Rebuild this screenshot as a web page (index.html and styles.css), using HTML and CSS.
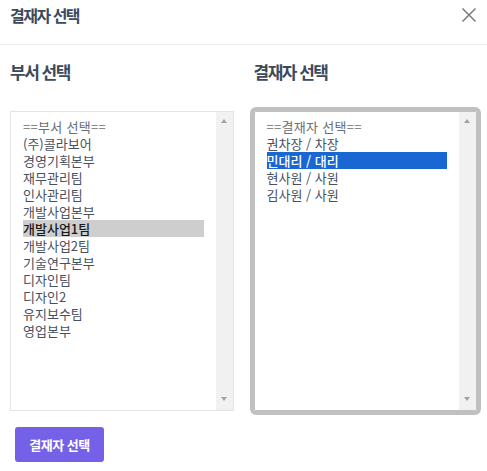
FILE: index.html
```html
<!DOCTYPE html>
<html lang="ko">
<head>
<meta charset="utf-8">
<link rel="stylesheet" href="styles.css">
</head>
<body>
<div class="modal">
  <div class="header">
    <div class="title">결재자 선택</div>
    <button class="close" aria-label="닫기">
      <svg width="16" height="16" viewBox="0 0 16 16"><path d="M1.5 1.5 L14.5 14.5 M14.5 1.5 L1.5 14.5" stroke="#7a7a7a" stroke-width="1.5" fill="none"/></svg>
    </button>
  </div>
  <div class="body">
    <div class="col">
      <h3 class="heading">부서 선택</h3>
      <div class="listbox">
        <div class="options">
          <div class="opt placeholder">==부서 선택==</div>
          <div class="opt">(주)콜라보어</div>
          <div class="opt">경영기획본부</div>
          <div class="opt">재무관리팀</div>
          <div class="opt">인사관리팀</div>
          <div class="opt">개발사업본부</div>
          <div class="opt sel-gray">개발사업1팀</div>
          <div class="opt">개발사업2팀</div>
          <div class="opt">기술연구본부</div>
          <div class="opt">디자인팀</div>
          <div class="opt">디자인2</div>
          <div class="opt">유지보수팀</div>
          <div class="opt">영업본부</div>
        </div>
        <div class="scrollbar"><span class="arr up"></span><span class="arr down"></span></div>
      </div>
    </div>
    <div class="col">
      <h3 class="heading">결재자 선택</h3>
      <div class="listbox focused">
        <div class="options">
          <div class="opt placeholder">==결재자 선택==</div>
          <div class="opt">권차장 / 차장</div>
          <div class="opt sel-blue">민대리 / 대리</div>
          <div class="opt">현사원 / 사원</div>
          <div class="opt">김사원 / 사원</div>
        </div>
        <div class="scrollbar"><span class="arr up"></span><span class="arr down"></span></div>
      </div>
    </div>
  </div>
  <div class="footer">
    <button class="btn">결재자 선택</button>
  </div>
</div>
</body>
</html>
```

FILE: styles.css
```css
* { box-sizing: border-box; }
html, body { margin: 0; padding: 0; background: #fff; }
body {
  font-family: "Noto Sans CJK KR", "Noto Sans", sans-serif;
  color: #3e4b5c;
  width: 487px;
  height: 471px;
  overflow: hidden;
}
.header {
  height: 45px;
  border-bottom: 1px solid #e9ecef;
  display: flex;
  justify-content: space-between;
  align-items: flex-start;
  padding: 4px 10px 0 10px;
}
.title {
  font-size: 16px;
  line-height: 22px;
  font-weight: 700;
  letter-spacing: -1.5px;
  color: #3b4a5c;
}
.close {
  border: 0;
  background: none;
  padding: 0;
  margin: 3px 0 0 0;
  width: 16px;
  height: 16px;
  display: block;
}
.close svg { display: block; }
.body {
  display: grid;
  grid-template-columns: 1fr 1fr;
  column-gap: 20px;
  padding: 0 10px;
}
.heading {
  margin: 14px 0 26px 0;
  font-size: 17px;
  line-height: 26px;
  font-weight: 700;
  letter-spacing: -1.5px;
  color: #3b4a5c;
}
.listbox {
  height: 300px;
  border: 1px solid #e2e4e7;
  display: flex;
  background: #fff;
}
.listbox.focused {
  border-color: #c0c0c0;
  outline: 4px solid #c0c0c0;
  border-radius: 2px;
}
.options {
  flex: 1;
  padding: 6px 12px 0 12px;
}
.opt {
  font-size: 13px;
  line-height: 17px;
  height: 17px;
  color: #47505e;
  white-space: nowrap;
}
.opt.placeholder { color: #6a6e75; letter-spacing: 0.3px; }
.opt.sel-gray { background: #cecece; color: #1a1a1a; font-weight: 500; }
.opt.sel-blue { background: #1967d2; color: #fff; font-weight: 500; }
.scrollbar {
  width: 17px;
  background: #f1f1f1;
  position: relative;
}
.arr {
  position: absolute;
  left: 5px;
  width: 0;
  height: 0;
  border-left: 3.5px solid transparent;
  border-right: 3.5px solid transparent;
}
.arr.up { top: 7px; border-bottom: 4px solid #a3a3a3; }
.arr.down { bottom: 9px; border-top: 4px solid #a3a3a3; }
.footer {
  padding: 16px 15px 0 15px;
}
.btn {
  font-family: "Noto Sans CJK KR", "Noto Sans", sans-serif;
  background: #7461e8;
  color: #fff;
  border: 0;
  border-radius: 3px;
  height: 35px;
  width: 89px;
  padding: 0;
  font-size: 13px;
  font-weight: 700;
  letter-spacing: -0.5px;
}
```
